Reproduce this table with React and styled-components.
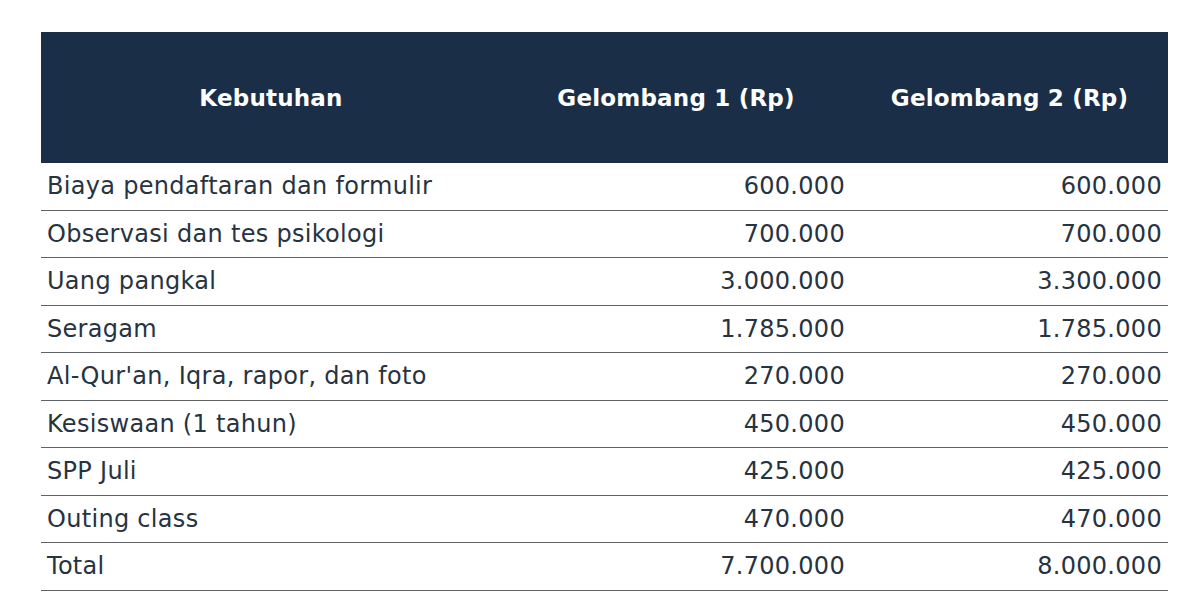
import React from 'react';
import styled, { createGlobalStyle } from 'styled-components';

const rows = [
  ['Biaya pendaftaran dan formulir', '600.000', '600.000'],
  ['Observasi dan tes psikologi', '700.000', '700.000'],
  ['Uang pangkal', '3.000.000', '3.300.000'],
  ['Seragam', '1.785.000', '1.785.000'],
  ["Al-Qur'an, Iqra, rapor, dan foto", '270.000', '270.000'],
  ['Kesiswaan (1 tahun)', '450.000', '450.000'],
  ['SPP Juli', '425.000', '425.000'],
  ['Outing class', '470.000', '470.000'],
  ['Total', '7.700.000', '8.000.000'],
];

const GlobalStyle = createGlobalStyle`
  body {
    margin: 0;
    background: #fff;
    font-family: "DejaVu Sans", "Noto Sans", sans-serif;
  }
`;

const Page = styled.div`
  padding: 32px 32px 0 41px;
`;

const Table = styled.table`
  width: 1127px;
  border-collapse: collapse;
  table-layout: fixed;
`;

const HeadCell = styled.th`
  box-sizing: border-box;
  width: ${(p) => p.$w}px;
  height: 131px;
  padding: 0 6px;
  background: #1a2f47;
  color: #fff;
  font-size: 23px;
  font-weight: 700;
  letter-spacing: 0.2px;
  text-align: center;
`;

const Row = styled.tr`
  border-bottom: 1px solid #5f6366;
`;

const Cell = styled.td`
  height: 46.5px;
  padding: 0 6px;
  color: #27333f;
  font-size: 24px;
  font-weight: 400;
  letter-spacing: 0.3px;
  text-align: ${(p) => (p.$num ? 'right' : 'left')};
  white-space: nowrap;
`;

export default function App() {
  return (
    <>
      <GlobalStyle />
      <Page>
        <Table>
          <thead>
            <tr>
              <HeadCell $w={460}>Kebutuhan</HeadCell>
              <HeadCell $w={350}>Gelombang 1 (Rp)</HeadCell>
              <HeadCell $w={317}>Gelombang 2 (Rp)</HeadCell>
            </tr>
          </thead>
          <tbody>
            {rows.map(([name, g1, g2]) => (
              <Row key={name}>
                <Cell>{name}</Cell>
                <Cell $num>{g1}</Cell>
                <Cell $num>{g2}</Cell>
              </Row>
            ))}
          </tbody>
        </Table>
      </Page>
    </>
  );
}
